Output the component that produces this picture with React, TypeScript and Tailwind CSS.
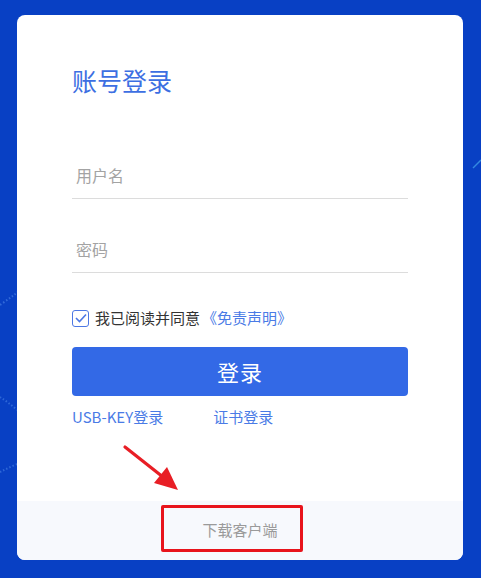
import { useState } from 'react';

const FONT = { fontFamily: '"Noto Sans CJK SC", "Noto Sans", sans-serif' };

function Backdrop() {
  // faint dotted arcs on the blue background
  return (
    <svg className="absolute inset-0 pointer-events-none" width="481" height="578" viewBox="0 0 481 578">
      <path d="M0 305 Q 10 298 18 292" stroke="#4f86e8" strokeWidth="2" strokeDasharray="1.5 2" fill="none" opacity="0.6" />
      <path d="M0 397 Q 8 402 17 410" stroke="#4f86e8" strokeWidth="2" strokeDasharray="1.5 2" fill="none" opacity="0.55" />
      <path d="M0 472 Q 8 468 17 464" stroke="#4f86e8" strokeWidth="2" strokeDasharray="1.5 2" fill="none" opacity="0.55" />
      <path d="M473 168 L 481 160" stroke="#3f9be8" strokeWidth="1.5" fill="none" opacity="0.8" />
    </svg>
  );
}

function Annotation() {
  return (
    <>
      <svg className="absolute left-0 top-0 pointer-events-none" width="481" height="578" viewBox="0 0 481 578">
        <line x1="125" y1="447" x2="168" y2="481" stroke="#e81e25" strokeWidth="3.2" strokeLinecap="round" />
        <polygon points="178,490 154,483 167,467" fill="#e81e25" />
      </svg>
      <div className="absolute left-[161px] top-[505px] w-[142px] h-[47px] border-[3px] border-[#e8141c] rounded-[2px]" />
    </>
  );
}

export default function App() {
  const [agreed, setAgreed] = useState(true);

  return (
    <div className="relative w-[481px] h-[578px] overflow-hidden bg-[#0840c4] pt-[15px] pl-[17px]" style={FONT}>
      <Backdrop />
      <div className="relative w-[446px] h-[545px] bg-white rounded-[8px] flex flex-col overflow-hidden">
        <div className="flex-1 px-[55px] pt-[49px]">
          <h1 className="text-[25px] leading-[32px] text-[#3d6fe2] font-normal">账号登录</h1>

          <div className="mt-[62px] h-[41px] pb-[6px] border-b border-[#dcdcdc] flex items-center">
            <input
              className="w-full outline-none text-[16px] text-[#333] placeholder:text-[#a3a3a3] bg-transparent pl-[4px]"
              placeholder="用户名"
            />
          </div>

          <div className="mt-[33px] h-[41px] pb-[6px] border-b border-[#dcdcdc] flex items-center">
            <input
              type="password"
              className="w-full outline-none text-[16px] text-[#333] placeholder:text-[#a3a3a3] bg-transparent pl-[4px]"
              placeholder="密码"
            />
          </div>

          <label className="mt-[36px] flex items-center h-[18px] text-[15px] text-[#333] cursor-pointer select-none">
            <span
              onClick={() => setAgreed(!agreed)}
              className="w-[17px] h-[17px] rounded-[3px] border-[1.5px] border-[#4d78e4] flex items-center justify-center"
            >
              {agreed && (
                <svg width="12" height="10" viewBox="0 0 12 10">
                  <path d="M1 5 L4.5 8.5 L11 1.5" stroke="#4d78e4" strokeWidth="1.6" fill="none" />
                </svg>
              )}
            </span>
            <span className="ml-[6px]">我已阅读并同意</span>
            <a className="ml-[2px] text-[#4a7be6]">《免责声明》</a>
          </label>

          <button className="mt-[20px] w-full h-[49px] rounded-[4px] bg-[#3369e6] text-white text-[22px] tracking-[1px]">
            登录
          </button>

          <div className="mt-[10px] flex items-center text-[15px] text-[#4a7be6] leading-[22px]">
            <a>USB-KEY登录</a>
            <a className="ml-[50px]">证书登录</a>
          </div>
        </div>

        <div className="h-[59px] bg-[#f7f9fd] flex items-center justify-center text-[15px] text-[#9a9a9a]">
          下载客户端
        </div>
      </div>
      <Annotation />
    </div>
  );
}
